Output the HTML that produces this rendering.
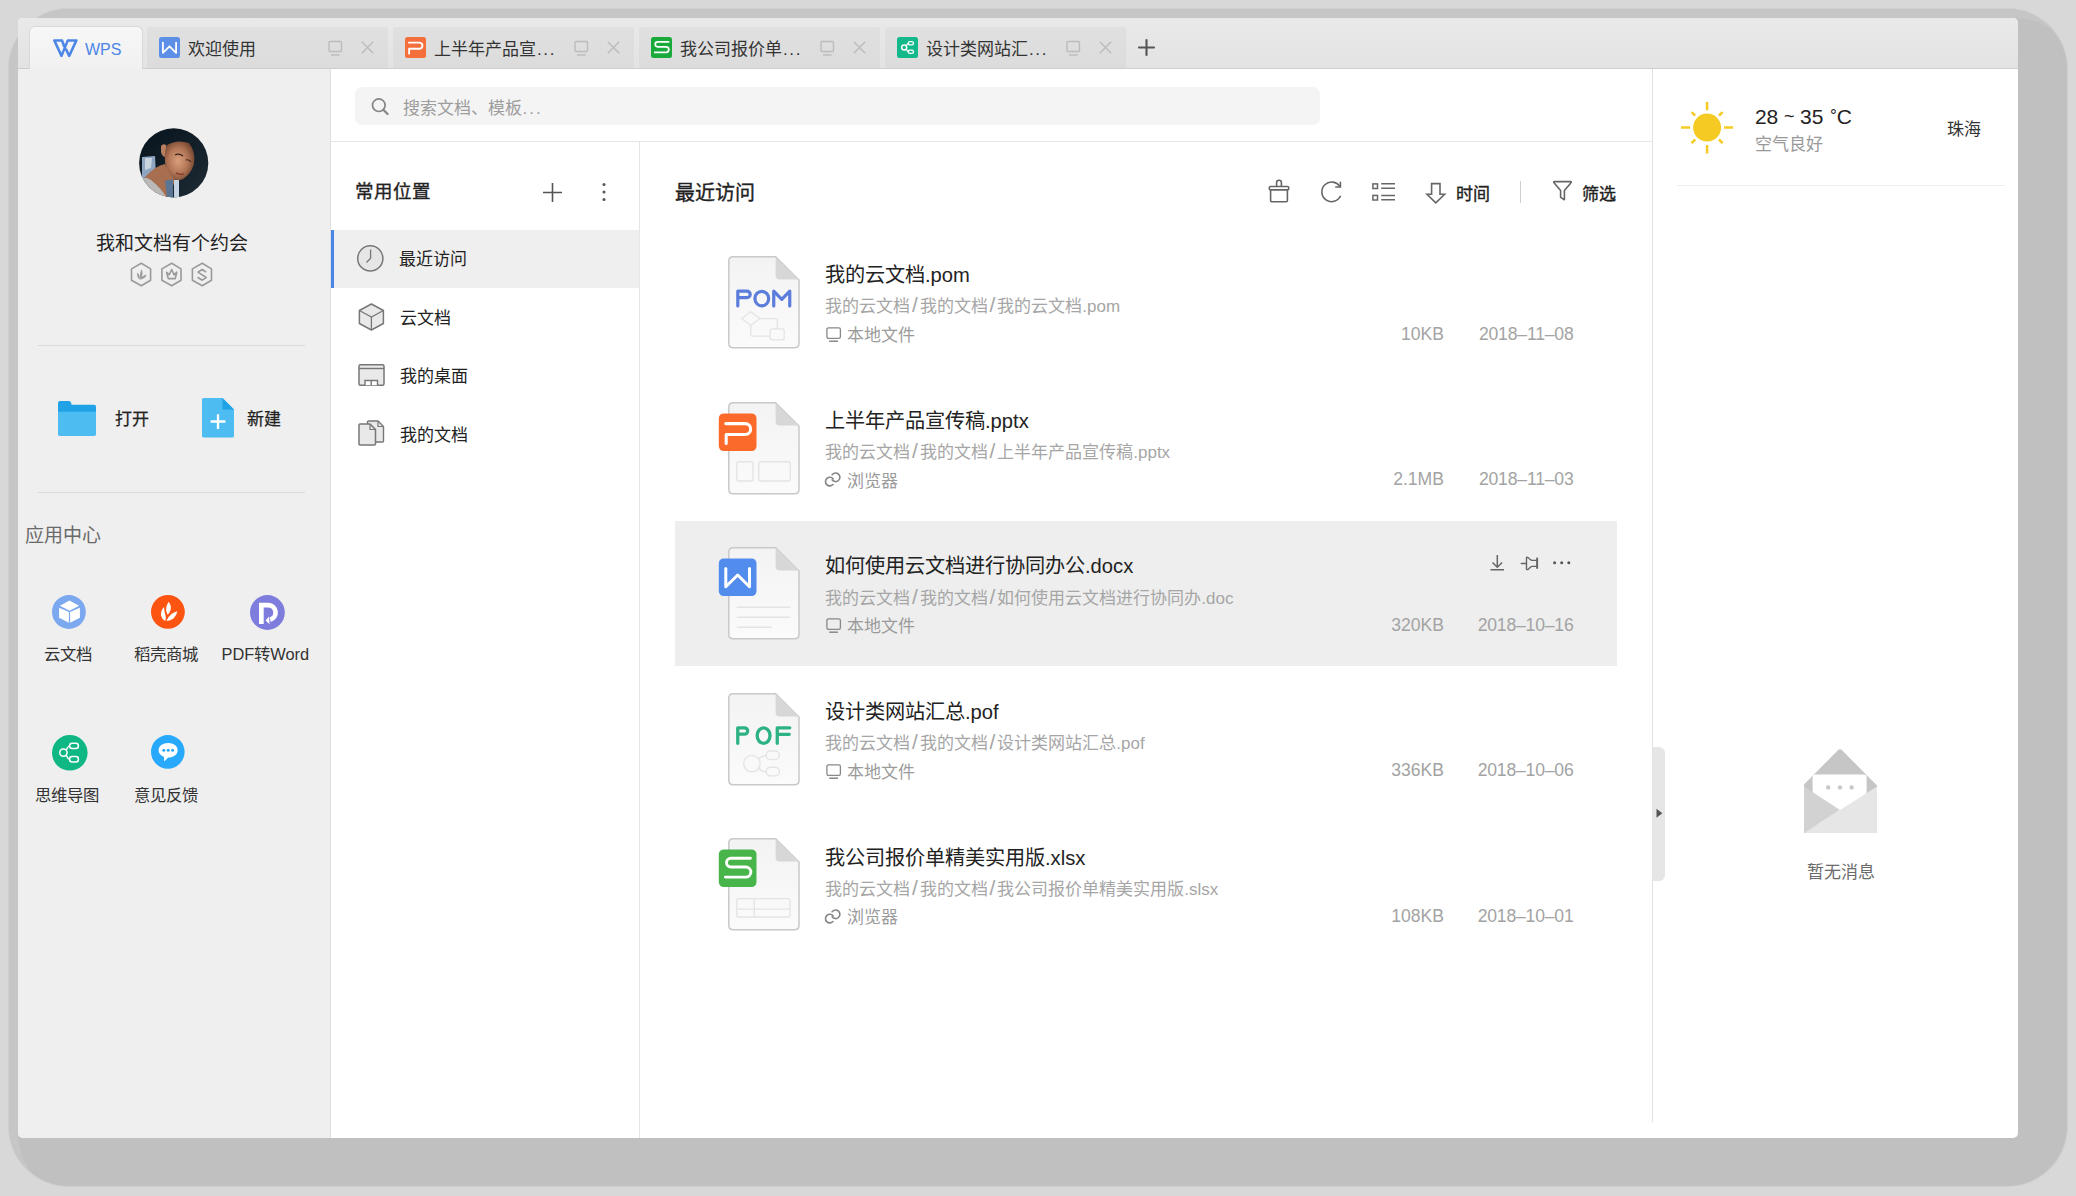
<!DOCTYPE html>
<html lang="zh-CN">
<head>
<meta charset="utf-8">
<style>
*{box-sizing:border-box;margin:0;padding:0}
html,body{width:2076px;height:1196px;overflow:hidden;background:#d8d8d8;font-family:"Liberation Sans",sans-serif;color:#222}
.a{position:absolute;white-space:nowrap}
svg.a{overflow:visible}
</style>
</head>
<body>

<div class="a" style="left:8.5px;top:8.8px;width:2058px;height:1177px;border-radius:60px;background:#c0c0c0;box-shadow:inset 9.5px 9.2px 0 #c6c6c6,0 0 0 1.2px #d0d0d0"></div>
<div class="a" style="left:18px;top:18px;width:2000px;height:1120px;border-radius:5px;background:#fff;overflow:hidden">
<div class="a" style="left:0;top:0;width:2000px;height:51px;background:linear-gradient(#e9e9e9,#e3e3e3);border-bottom:1px solid #cecece"></div>
<div class="a" style="left:0;top:51px;width:313px;height:1069px;background:#efefef;border-right:1px solid #dfdfdf"></div>
<div class="a" style="left:621px;top:124px;width:1px;height:996px;background:#e6e6e6"></div>
<div class="a" style="left:313px;top:123px;width:1322px;height:1px;background:#e6e6e6"></div>
<div class="a" style="left:1634px;top:51px;width:1px;height:1053px;background:#e2e2e2"></div>
</div>
<div class="a" style="left:29px;top:26px;width:114px;height:43px;border-radius:6px 6px 0 0;background:linear-gradient(#f7f7f7,#f1f1f1);border:1px solid #d9d9d9;border-bottom:none"></div>
<svg class="a" style="left:0;top:0" width="1" height="1"><path d="M64 46 L62 40.4 L54.3 40.4 L61.5 55.9 L67.8 40.4 L76.4 40.4 L69.2 55.9 L66.2 49.6" fill="none" stroke="#4c86e6" stroke-width="2.5" stroke-linejoin="round" stroke-linecap="round"/></svg>
<div class="a" style="left:85px;top:41.6px;font-size:16px;line-height:16px;color:#4c86e6;">WPS</div>
<div class="a" style="left:147px;top:27px;width:241px;height:41px;border-radius:3px 3px 0 0;background:linear-gradient(#e0e0e0,#dcdcdc)"></div>
<svg class="a" style="left:159px;top:37px" width="21" height="21" viewBox="0 0 21 21"><rect width="21" height="21" rx="2.5" fill="#5d8fe6"/><path d="M3.9 5.6 V15.8 L10.5 9.3 L17.1 15.8 V5.6" fill="none" stroke="#fff" stroke-width="1.8" stroke-linecap="round" stroke-linejoin="round"/></svg>
<div class="a" style="left:188px;top:40.5px;font-size:17px;line-height:17px;color:#333;">欢迎使用</div>
<svg class="a" style="left:328px;top:40px" width="15" height="17" viewBox="0 0 15 17"><rect x="1" y="1.5" width="12.5" height="10" rx="1" fill="none" stroke="#bcbcbc" stroke-width="1.4"/><line x1="3" y1="15" x2="11.5" y2="15" stroke="#bcbcbc" stroke-width="1.5"/></svg>
<svg class="a" style="left:360.5px;top:41px" width="13" height="13" viewBox="0 0 13 13"><path d="M0.8 0.8L12.2 12.2M12.2 0.8L0.8 12.2" stroke="#bcbcbc" stroke-width="1.4"/></svg>
<div class="a" style="left:393px;top:27px;width:241px;height:41px;border-radius:3px 3px 0 0;background:linear-gradient(#e0e0e0,#dcdcdc)"></div>
<svg class="a" style="left:405px;top:37px" width="21" height="21" viewBox="0 0 21 21"><rect width="21" height="21" rx="2.5" fill="#f46f3b"/><path d="M3.9 5.7 H14.7 A3.04 3.04 0 0 1 14.7 11.75 H4.1 V16.7" fill="none" stroke="#fff" stroke-width="1.8" stroke-linecap="round" stroke-linejoin="round"/></svg>
<div class="a" style="left:434px;top:40.5px;font-size:17px;line-height:17px;color:#333;">上半年产品宣<span style="letter-spacing:1.6px;margin-left:1px">...</span></div>
<svg class="a" style="left:574px;top:40px" width="15" height="17" viewBox="0 0 15 17"><rect x="1" y="1.5" width="12.5" height="10" rx="1" fill="none" stroke="#bcbcbc" stroke-width="1.4"/><line x1="3" y1="15" x2="11.5" y2="15" stroke="#bcbcbc" stroke-width="1.5"/></svg>
<svg class="a" style="left:606.5px;top:41px" width="13" height="13" viewBox="0 0 13 13"><path d="M0.8 0.8L12.2 12.2M12.2 0.8L0.8 12.2" stroke="#bcbcbc" stroke-width="1.4"/></svg>
<div class="a" style="left:639px;top:27px;width:241px;height:41px;border-radius:3px 3px 0 0;background:linear-gradient(#e0e0e0,#dcdcdc)"></div>
<svg class="a" style="left:651px;top:37px" width="21" height="21" viewBox="0 0 21 21"><rect width="21" height="21" rx="2.5" fill="#1aaa3c"/><path d="M17.6 4.9 H6.7 A2.45 2.45 0 0 0 6.7 9.8 H15 A2.8 2.8 0 0 1 15 15.4 H3.7" fill="none" stroke="#fff" stroke-width="1.7" stroke-linecap="round" stroke-linejoin="round"/></svg>
<div class="a" style="left:680px;top:40.5px;font-size:17px;line-height:17px;color:#333;">我公司报价单<span style="letter-spacing:1.6px;margin-left:1px">...</span></div>
<svg class="a" style="left:820px;top:40px" width="15" height="17" viewBox="0 0 15 17"><rect x="1" y="1.5" width="12.5" height="10" rx="1" fill="none" stroke="#bcbcbc" stroke-width="1.4"/><line x1="3" y1="15" x2="11.5" y2="15" stroke="#bcbcbc" stroke-width="1.5"/></svg>
<svg class="a" style="left:852.5px;top:41px" width="13" height="13" viewBox="0 0 13 13"><path d="M0.8 0.8L12.2 12.2M12.2 0.8L0.8 12.2" stroke="#bcbcbc" stroke-width="1.4"/></svg>
<div class="a" style="left:885px;top:27px;width:241px;height:41px;border-radius:3px 3px 0 0;background:linear-gradient(#e0e0e0,#dcdcdc)"></div>
<svg class="a" style="left:897px;top:37px" width="21" height="21" viewBox="0 0 21 21"><rect width="21" height="21" rx="2.5" fill="#13b98a"/><circle cx="7.2" cy="10.5" r="2.5" fill="none" stroke="#fff" stroke-width="1.4"/><rect x="11.3" y="4.6" width="5.2" height="3.2" rx="1.6" fill="none" stroke="#fff" stroke-width="1.3"/><rect x="11.3" y="13.2" width="5.2" height="3.2" rx="1.6" fill="none" stroke="#fff" stroke-width="1.3"/><path d="M9.2 9.2 Q10.2 6.6 11.3 6.3 M9.2 11.8 Q10.2 14.4 11.3 14.8" fill="none" stroke="#fff" stroke-width="1.3"/></svg>
<div class="a" style="left:926px;top:40.5px;font-size:17px;line-height:17px;color:#333;">设计类网站汇<span style="letter-spacing:1.6px;margin-left:1px">...</span></div>
<svg class="a" style="left:1066px;top:40px" width="15" height="17" viewBox="0 0 15 17"><rect x="1" y="1.5" width="12.5" height="10" rx="1" fill="none" stroke="#bcbcbc" stroke-width="1.4"/><line x1="3" y1="15" x2="11.5" y2="15" stroke="#bcbcbc" stroke-width="1.5"/></svg>
<svg class="a" style="left:1098.5px;top:41px" width="13" height="13" viewBox="0 0 13 13"><path d="M0.8 0.8L12.2 12.2M12.2 0.8L0.8 12.2" stroke="#bcbcbc" stroke-width="1.4"/></svg>
<svg class="a" style="left:1138px;top:39px" width="17" height="17" viewBox="0 0 17 17"><path d="M8.5 1V16M1 8.5H16" stroke="#555" stroke-width="2.1" stroke-linecap="round"/></svg>
<svg class="a" style="left:138.5px;top:127.8px" width="70" height="70" viewBox="0 0 70 70">
  <defs><clipPath id="cav"><circle cx="34.7" cy="34.9" r="34.6"/></clipPath>
  <radialGradient id="face" cx="0.45" cy="0.5" r="0.6"><stop offset="0" stop-color="#d9a07c"/><stop offset="0.55" stop-color="#b27656"/><stop offset="1" stop-color="#6b402c"/></radialGradient>
  <linearGradient id="bgd" x1="0" y1="0" x2="1" y2="1"><stop offset="0" stop-color="#07131c"/><stop offset="1" stop-color="#1e2b35"/></linearGradient></defs>
  <g clip-path="url(#cav)">
    <rect width="70" height="70" fill="url(#bgd)"/>
    <path d="M3 29 L16 28 L17 47 L3 50 Z" fill="#8ea6c2"/>
    <path d="M6 30 L13 30 L12 40 L6 42 Z" fill="#c9d3de"/>
    <path d="M22 18 Q24 15 27 17 L27 29 Q23 29 22 24 Z" fill="#b98060"/>
    <path d="M28 17 Q38 11 50 15 Q57 24 55 36 Q52 46 44 51 Q38 54 33 50 Q27 44 26 34 Q25 24 28 16 Z" fill="url(#face)"/>
    <path d="M36 27 Q40 25 44 28" fill="none" stroke="#3a2118" stroke-width="1.2"/>
    <path d="M47 32 Q50 31 52 34" fill="none" stroke="#3a2118" stroke-width="1.2"/>
    <path d="M37 45 Q41 47 45 46" fill="none" stroke="#8a3f2c" stroke-width="1.6"/>
    <path d="M6 49 Q16 38 26 36 Q30 46 36 52 L30 70 L16 70 Z" fill="#a86e50"/>
    <path d="M0 50 Q6 48 12 52 Q22 60 28 70 L0 70 Z" fill="#b9b9b9"/>
    <path d="M26 53 L34 51 L34 70 L28 70 Z" fill="#5b7595"/>
    <path d="M35 52 L40 52 L40 70 L35 70 Z" fill="#c5d2e4"/>
  </g>
</svg>
<div class="a" style="left:96px;top:234px;font-size:19px;line-height:19px;color:#222;">我和文档有个约会</div>
<svg class="a" style="left:128px;top:261px" width="88" height="28" viewBox="0 0 88 28">
  <g fill="none" stroke="#9a9a9a" stroke-width="1.6" stroke-linejoin="round">
    <path d="M13.3 2.3 L22.6 7.9 V19.2 L13.3 24.7 L3.5 19.2 V7.9 Z"/>
    <path d="M43.7 2.3 L53 7.9 V19.2 L43.7 24.7 L33.9 19.2 V7.9 Z"/>
    <path d="M74.2 2.3 L83.5 7.9 V19.2 L74.2 24.7 L64.4 19.2 V7.9 Z"/>
    <path d="M38.6 11.2 L41.2 13.8 L43.7 8.5 L46.1 13.8 L48.8 11.2 L47.2 17.6 H40.3 Z"/>
    <path d="M78.2 11.2 L74.2 8.5 L70 11.2 L78.2 16.5 L74.2 19.2 L69.6 16.3"/>
  </g>
  <g fill="#9c9c9c">
    <path d="M13.6 8.2 Q15.6 11.8 13.5 16.5 Q12.8 17.4 12.3 17.9 Q10.9 13.8 13.6 8.2 Z"/>
    <path d="M9.3 11.6 Q12.4 14.5 11.6 18.4 Q8.5 16.5 9.3 11.6 Z"/>
    <path d="M18.6 13.6 Q17.6 17.8 11.6 18.8 Q13.6 14.8 18.6 13.6 Z"/>
  </g>
</svg>
<div class="a" style="left:38px;top:345px;width:267px;height:1px;background:#dadada"></div>
<svg class="a" style="left:58px;top:400.8px" width="38" height="36" viewBox="0 0 38 36">
  <path d="M0 2 Q0 0 2 0 H11 Q12.6 0 13 1.5 L13.6 3.8 H36.2 Q38 3.8 38 5.6 V11 H0 Z" fill="#20a3e6"/>
  <path d="M0 10.8 H38 V33.3 Q38 35 36.3 35 H1.7 Q0 35 0 33.3 Z" fill="#4dbcf1"/>
</svg>
<div class="a" style="left:115px;top:411px;font-size:17px;line-height:17px;color:#222;-webkit-text-stroke:0.25px #222">打开</div>
<svg class="a" style="left:202.3px;top:398.2px" width="32" height="40" viewBox="0 0 32 40">
  <path d="M0 1.5 Q0 0 1.5 0 H20.5 L32 11.5 V38 Q32 39.4 30.6 39.4 H1.5 Q0 39.4 0 38 Z" fill="#4dbcf1"/>
  <path d="M20.5 0 L32 11.5 H20.5 Z" fill="#20a3e6"/>
  <path d="M16 16.2 V31 M8.6 23.5 H23.4" stroke="#fff" stroke-width="2.3"/>
</svg>
<div class="a" style="left:246.5px;top:411px;font-size:17px;line-height:17px;color:#222;-webkit-text-stroke:0.25px #222">新建</div>
<div class="a" style="left:38px;top:492px;width:267px;height:1px;background:#dadada"></div>
<div class="a" style="left:24.5px;top:525.5px;font-size:19px;line-height:19px;color:#6a6a6a;">应用中心</div>
<svg class="a" style="left:51.9px;top:595.3px" width="34" height="34" viewBox="0 0 34 34">
  <circle cx="16.9" cy="17" r="16.9" fill="#7ba8ef"/>
  <path d="M17.5 5.6 L27.1 10.7 L17.5 15.8 L7.9 10.7 Z" fill="#fff"/>
  <path d="M7.1 12.8 L16.9 16.9 V27.8 L7.1 22.7 Z" fill="#fff"/>
  <path d="M27.9 12.8 L18.1 16.9 V27.8 L27.9 22.7 Z" fill="#fff"/>
</svg>
<div class="a" style="left:43.6px;top:646px;font-size:16.4px;line-height:16.4px;color:#333;">云文档</div>
<svg class="a" style="left:150.6px;top:595.1px" width="34" height="34" viewBox="0 0 34 34">
  <circle cx="16.9" cy="16.9" r="16.9" fill="#fd5411"/>
  <path d="M17.7 6.7 Q20.6 10.5 19.6 15 Q18.8 17.8 16.6 19.7 Q14.6 16.5 15.2 12.8 Q15.8 9.2 17.7 6.7 Z" fill="#fff"/>
  <path d="M13 12 Q13.4 17 14.4 20 Q15.4 23.4 14.3 26.1 Q10.8 24 10 20.4 Q9.6 15.6 13 12 Z" fill="#fff"/>
  <path d="M15.5 26.1 Q17.2 21.4 20.8 18.8 Q23.6 16.8 26.4 16.2 Q25.6 20.6 22.6 23.2 Q19.6 25.6 15.5 26.1 Z" fill="#fff"/>
</svg>
<div class="a" style="left:133.9px;top:646px;font-size:16.4px;line-height:16.4px;color:#333;">稻壳商城</div>
<svg class="a" style="left:249.7px;top:595.3px" width="35" height="35" viewBox="0 0 35 35">
  <circle cx="17.4" cy="17.5" r="17.4" fill="#7e7cdd"/>
  <path d="M11.35 28.9 V10.2 H18.7 A7.4 7.4 0 0 1 20.2 24.7" fill="none" stroke="#fff" stroke-width="4.7"/>
  <path d="M15.6 25.6 L19 21.6 L19.6 29.2 Z" fill="#fff"/>
</svg>
<div class="a" style="left:221.5px;top:646px;font-size:16.4px;line-height:16.4px;color:#333;">PDF转Word</div>
<svg class="a" style="left:51.8px;top:735.2px" width="36" height="36" viewBox="0 0 36 36">
  <circle cx="17.8" cy="17.8" r="17.8" fill="#0fb784"/>
  <circle cx="11.4" cy="17.6" r="3.7" fill="none" stroke="#fff" stroke-width="1.5"/>
  <rect x="17.6" y="8.2" width="8.8" height="5.4" rx="2.5" fill="none" stroke="#fff" stroke-width="1.5"/>
  <rect x="17.6" y="21.6" width="8.8" height="5.4" rx="2.5" fill="none" stroke="#fff" stroke-width="1.5"/>
  <path d="M14.2 15 Q15.8 11.4 17.6 10.9 M14.2 20.2 Q15.8 23.8 17.6 24.3" fill="none" stroke="#fff" stroke-width="1.5"/>
</svg>
<div class="a" style="left:35px;top:786.5px;font-size:16.4px;line-height:16.4px;color:#333;">思维导图</div>
<svg class="a" style="left:150.5px;top:735px" width="34" height="34" viewBox="0 0 34 34">
  <circle cx="16.8" cy="16.9" r="16.8" fill="#28a9fb"/>
  <path d="M17.2 8 C22.6 8 26.6 11 26.6 15.3 C26.6 19.5 22.6 22.6 17.2 22.6 L13.2 26.4 L13 22 C9.8 20.8 7.6 18.3 7.6 15.3 C7.6 11 11.8 8 17.2 8 Z" fill="#fff"/>
  <circle cx="12.8" cy="15.2" r="1.5" fill="#28a9fb"/><circle cx="17.2" cy="15.2" r="1.5" fill="#28a9fb"/><circle cx="21.6" cy="15.2" r="1.5" fill="#28a9fb"/>
</svg>
<div class="a" style="left:134px;top:786.5px;font-size:16.4px;line-height:16.4px;color:#333;">意见反馈</div>
<div class="a" style="left:355px;top:87px;width:965px;height:38px;border-radius:7px;background:#f4f4f4"></div>
<svg class="a" style="left:370px;top:97px" width="22" height="20" viewBox="0 0 22 20"><circle cx="8.8" cy="8.2" r="6.3" fill="none" stroke="#858585" stroke-width="1.7"/><path d="M13.3 12.7 L17.6 17" stroke="#858585" stroke-width="2.2" stroke-linecap="round"/></svg>
<div class="a" style="left:402.5px;top:100.3px;font-size:17px;line-height:17px;color:#9d9d9d;">搜索文档、模板<span style="letter-spacing:2px;margin-left:1px">...</span></div>
<div class="a" style="left:354.5px;top:183.2px;font-size:18.5px;line-height:18.5px;color:#222;-webkit-text-stroke:0.35px #222">常用位置</div>
<svg class="a" style="left:542px;top:182px" width="22" height="22" viewBox="0 0 22 22"><path d="M10.5 1V20M1 10.5H20" stroke="#555" stroke-width="1.6"/></svg>
<svg class="a" style="left:601px;top:182px" width="6" height="20" viewBox="0 0 6 20"><circle cx="3" cy="2.5" r="1.5" fill="#555"/><circle cx="3" cy="10" r="1.5" fill="#555"/><circle cx="3" cy="17.5" r="1.5" fill="#555"/></svg>
<div class="a" style="left:331px;top:230px;width:308px;height:58px;background:#efefef"></div>
<div class="a" style="left:331px;top:230px;width:3px;height:58px;background:#4a86e8"></div>
<svg class="a" style="left:356px;top:244px" width="29" height="29" viewBox="0 0 29 29"><circle cx="14.3" cy="14.4" r="12.6" fill="#e6e6e6" stroke="#777" stroke-width="1.5"/><path d="M14.6 5.5 V14.3 L10.5 18.5" fill="none" stroke="#777" stroke-width="1.3"/></svg>
<div class="a" style="left:399px;top:251px;font-size:17px;line-height:17px;color:#222;">最近访问</div>
<svg class="a" style="left:357px;top:302px" width="29" height="30" viewBox="0 0 29 30"><path d="M14.4 2 L26.4 8.5 V21.5 L14.4 28 L2.4 21.5 V8.5 Z" fill="#e9e9e9" stroke="#777" stroke-width="1.5" stroke-linejoin="round"/><path d="M2.4 8.5 L14.4 15 L26.4 8.5 M14.4 15 V28" fill="none" stroke="#777" stroke-width="1.3"/></svg>
<div class="a" style="left:399.5px;top:309.5px;font-size:17px;line-height:17px;color:#222;">云文档</div>
<svg class="a" style="left:357px;top:363px" width="29" height="25" viewBox="0 0 29 25"><rect x="2" y="1.8" width="25" height="20.5" rx="1.5" fill="#e9e9e9" stroke="#777" stroke-width="1.5"/><path d="M2 5.5 H27" stroke="#777" stroke-width="1.4"/><path d="M8 22.3 V17.5 H20.5 V22.3 M14.2 17.5 V22.3" fill="#fff" stroke="#777" stroke-width="1.4"/></svg>
<div class="a" style="left:399.5px;top:368.4px;font-size:17px;line-height:17px;color:#222;">我的桌面</div>
<svg class="a" style="left:357px;top:419px" width="29" height="28" viewBox="0 0 29 28"><path d="M10.5 3 Q10.5 2 11.5 2 H21 L26.5 7.5 V22 Q26.5 23 25.5 23 H11.5 Q10.5 23 10.5 22 Z" fill="#e9e9e9" stroke="#777" stroke-width="1.4"/><path d="M2 6 Q2 5 3 5 H13 L18.5 10.5 V25 Q18.5 26 17.5 26 H3 Q2 26 2 25 Z" fill="#e9e9e9" stroke="#777" stroke-width="1.5"/><path d="M13 5 V10.5 H18.5" fill="none" stroke="#777" stroke-width="1.2"/><path d="M21 2 V7.5 H26.5" fill="none" stroke="#777" stroke-width="1.2"/></svg>
<div class="a" style="left:399.5px;top:427.4px;font-size:17px;line-height:17px;color:#222;">我的文档</div>
<div class="a" style="left:675px;top:182.6px;font-size:20px;line-height:20px;color:#222;-webkit-text-stroke:0.35px #222">最近访问</div>
<svg class="a" style="left:1266px;top:178px" width="26" height="26" viewBox="0 0 26 26">
 <path d="M10.6 8.4 V4.6 Q10.6 2.2 13 2.2 Q15.4 2.2 15.4 4.6 V8.4" fill="none" stroke="#666" stroke-width="1.6"/>
 <rect x="3.3" y="8.5" width="19.4" height="3.4" rx="1.2" fill="none" stroke="#666" stroke-width="1.6"/>
 <path d="M4.6 11.9 V22.6 Q4.6 23.7 5.7 23.7 H20.3 Q21.4 23.7 21.4 22.6 V11.9" fill="none" stroke="#666" stroke-width="1.6"/>
</svg>
<svg class="a" style="left:1318px;top:178px" width="27" height="27" viewBox="0 0 27 27">
 <path d="M21.9 8.6 A9.8 9.8 0 1 0 22.6 17.8" fill="none" stroke="#666" stroke-width="1.6"/>
 <path d="M22.4 3.8 V9 H17.2" fill="none" stroke="#666" stroke-width="1.6"/>
</svg>
<svg class="a" style="left:1370px;top:181px" width="28" height="22" viewBox="0 0 28 22">
 <rect x="2.9" y="2.9" width="4.6" height="4.6" fill="none" stroke="#666" stroke-width="1.5"/>
 <rect x="2.9" y="14.4" width="4.6" height="4.6" fill="none" stroke="#666" stroke-width="1.5"/>
 <path d="M11.2 2.8 H25 M11.2 7.2 H25 M11.2 14.4 H25 M11.2 18.7 H25" stroke="#666" stroke-width="1.5"/>
</svg>
<svg class="a" style="left:1425px;top:181px" width="22" height="24" viewBox="0 0 22 24">
 <path d="M6.6 2.6 H15 V13.2 H19.6 L10.8 21.8 L2 13.2 H6.6 Z" fill="none" stroke="#666" stroke-width="1.6" stroke-linejoin="miter"/>
</svg>
<div class="a" style="left:1456px;top:186px;font-size:17px;line-height:17px;color:#222;-webkit-text-stroke:0.35px #222">时间</div>
<div class="a" style="left:1520px;top:180.5px;width:1.3px;height:22.3px;background:#cfcfcf"></div>
<svg class="a" style="left:1551px;top:179px" width="23" height="24" viewBox="0 0 23 24">
 <path d="M3 3.8 Q2.2 2.6 3.6 2.6 H19.4 Q20.8 2.6 20 3.8 L13.4 11.4 V20.8 L9.6 18.4 V11.4 Z" fill="none" stroke="#666" stroke-width="1.6" stroke-linejoin="round"/>
</svg>
<div class="a" style="left:1582.3px;top:186px;font-size:17px;line-height:17px;color:#222;-webkit-text-stroke:0.35px #222">筛选</div>
<div class="a" style="left:675px;top:521px;width:942px;height:144.5px;background:#eeeeee"></div>
<svg class="a" style="left:728px;top:256.0px" width="72" height="93" viewBox="0 0 72 93">
<defs><linearGradient id="dg0" x1="0" y1="0" x2="0" y2="1"><stop offset="0" stop-color="#f3f3f3"/><stop offset="1" stop-color="#fbfbfb"/></linearGradient></defs>
<path d="M5.2 0.8 H47.6 L71 24 V87.3 Q71 91.8 66.5 91.8 H5.3 Q0.8 91.8 0.8 87.3 V5.2 Q0.8 0.8 5.2 0.8 Z" fill="url(#dg0)" stroke="#c9c9c9" stroke-width="1.5"/>
<path d="M47.6 1.3 V19.5 Q47.6 23.6 51.6 23.6 H70.6 Z" fill="#d7d7d7"/>
<path d="M9.8 50 V35.2 H19 A3.2 3.2 0 0 1 19 41.6 H9.8" fill="none" stroke="#5c7ddb" stroke-width="3.2" stroke-linecap="round" stroke-linejoin="round"/>
<ellipse cx="33.8" cy="42.6" rx="6.9" ry="7.3" fill="none" stroke="#5c7ddb" stroke-width="3.2"/>
<path d="M45.75 50 V35.2 L53.75 43.4 L61.75 35.2 V50" fill="none" stroke="#5c7ddb" stroke-width="3.2" stroke-linecap="round" stroke-linejoin="round"/>
<path d="M22.8 55.8 L32 62.6 L22.8 69.4 L13.6 62.6 Z" fill="none" stroke="#e4e4e4" stroke-width="1.3"/>
<path d="M32 62.6 H47.8 Q49.4 62.6 49.4 64.2 V78.6 Q49.4 80.2 47.8 80.2 H24.4 Q22.8 80.2 22.8 78.6 V69.4" fill="none" stroke="#e4e4e4" stroke-width="1.3"/>
<rect x="42.2" y="72.8" width="14" height="11" rx="2" fill="#fafafa" stroke="#e4e4e4" stroke-width="1.3"/>
</svg>
<div class="a" style="left:825px;top:265.2px;font-size:20.2px;line-height:20.2px;color:#222;">我的云文档.pom</div>
<div class="a" style="left:825px;top:298.4px;font-size:17px;line-height:17px;color:#a6a6a6;">我的云文档<span style="margin:0 1.9px;font-size:21px;line-height:0">/</span>我的文档<span style="margin:0 1.9px;font-size:21px;line-height:0">/</span>我的云文档.pom</div>
<svg class="a" style="left:825px;top:326.0px" width="18" height="18" viewBox="0 0 18 18"><rect x="1.9" y="1.8" width="13.5" height="10.6" rx="1.6" fill="none" stroke="#888" stroke-width="1.3"/><path d="M4.2 15.2 H13" stroke="#888" stroke-width="1.5"/></svg>
<div class="a" style="left:846.5px;top:327.0px;font-size:17px;line-height:17px;color:#9b9b9b;">本地文件</div>
<div class="a" style="left:1300px;top:324.5px;width:144px;text-align:right;font-size:17.6px;line-height:18px;color:#a3a3a3;letter-spacing:0px">10KB</div>
<div class="a" style="left:1400px;top:324.5px;width:173.5px;text-align:right;font-size:17.6px;line-height:18px;color:#a3a3a3;letter-spacing:-0.2px">2018–11–08</div>
<svg class="a" style="left:728px;top:401.6px" width="72" height="93" viewBox="0 0 72 93">
<defs><linearGradient id="dg1" x1="0" y1="0" x2="0" y2="1"><stop offset="0" stop-color="#f3f3f3"/><stop offset="1" stop-color="#fbfbfb"/></linearGradient></defs>
<path d="M5.2 0.8 H47.6 L71 24 V87.3 Q71 91.8 66.5 91.8 H5.3 Q0.8 91.8 0.8 87.3 V5.2 Q0.8 0.8 5.2 0.8 Z" fill="url(#dg1)" stroke="#c9c9c9" stroke-width="1.5"/>
<path d="M47.6 1.3 V19.5 Q47.6 23.6 51.6 23.6 H70.6 Z" fill="#d7d7d7"/>
<rect x="8.8" y="59.7" width="16.2" height="19.3" rx="2" fill="none" stroke="#e4e4e4" stroke-width="1.4"/>
<rect x="30.7" y="59.7" width="31.6" height="19.3" rx="2" fill="none" stroke="#e4e4e4" stroke-width="1.4"/><g transform="translate(-9.2,11.4)"><rect width="37.7" height="37.7" rx="5" fill="#fb6a2b"/><path d="M7 10.2 H26.4 A5.45 5.45 0 0 1 26.4 21.1 H7.4 V30" fill="none" stroke="#fff" stroke-width="3.1" stroke-linecap="round" stroke-linejoin="round"/></g>
</svg>
<div class="a" style="left:825px;top:410.79999999999995px;font-size:20.2px;line-height:20.2px;color:#222;">上半年产品宣传稿.pptx</div>
<div class="a" style="left:825px;top:444.0px;font-size:17px;line-height:17px;color:#a6a6a6;">我的云文档<span style="margin:0 1.9px;font-size:21px;line-height:0">/</span>我的文档<span style="margin:0 1.9px;font-size:21px;line-height:0">/</span>上半年产品宣传稿.pptx</div>
<svg class="a" style="left:825.3px;top:471.70000000000005px" width="16" height="16" viewBox="0 0 16 16"><path d="M7.12 2.77 A4.3 4.3 0 1 1 7.12 7.83" fill="none" stroke="#858585" stroke-width="1.6" stroke-linecap="round"/><path d="M7.94 12.53 A4.3 4.3 0 1 1 8.09 6.84" fill="none" stroke="#858585" stroke-width="1.6" stroke-linecap="round"/></svg>
<div class="a" style="left:846.5px;top:472.6px;font-size:17px;line-height:17px;color:#9b9b9b;">浏览器</div>
<div class="a" style="left:1300px;top:470.1px;width:144px;text-align:right;font-size:17.6px;line-height:18px;color:#a3a3a3;letter-spacing:0px">2.1MB</div>
<div class="a" style="left:1400px;top:470.1px;width:173.5px;text-align:right;font-size:17.6px;line-height:18px;color:#a3a3a3;letter-spacing:-0.2px">2018–11–03</div>
<svg class="a" style="left:728px;top:547.2px" width="72" height="93" viewBox="0 0 72 93">
<defs><linearGradient id="dg2" x1="0" y1="0" x2="0" y2="1"><stop offset="0" stop-color="#f3f3f3"/><stop offset="1" stop-color="#fbfbfb"/></linearGradient></defs>
<path d="M5.2 0.8 H47.6 L71 24 V87.3 Q71 91.8 66.5 91.8 H5.3 Q0.8 91.8 0.8 87.3 V5.2 Q0.8 0.8 5.2 0.8 Z" fill="url(#dg2)" stroke="#c9c9c9" stroke-width="1.5"/>
<path d="M47.6 1.3 V19.5 Q47.6 23.6 51.6 23.6 H70.6 Z" fill="#d7d7d7"/>
<path d="M8.8 60.2 H62.3 M8.8 70.2 H62.3 M8.8 80.3 H43.9" stroke="#e4e4e4" stroke-width="1.4"/><g transform="translate(-9.2,11.4)"><rect width="37.7" height="37.7" rx="5" fill="#528ded"/><path d="M7 10 V28.3 L18.9 16.6 L30.7 28.3 V10" fill="none" stroke="#fff" stroke-width="3" stroke-linecap="round" stroke-linejoin="round"/></g>
</svg>
<div class="a" style="left:825px;top:556.4px;font-size:20.2px;line-height:20.2px;color:#222;">如何使用云文档进行协同办公.docx</div>
<div class="a" style="left:825px;top:589.5999999999999px;font-size:17px;line-height:17px;color:#a6a6a6;">我的云文档<span style="margin:0 1.9px;font-size:21px;line-height:0">/</span>我的文档<span style="margin:0 1.9px;font-size:21px;line-height:0">/</span>如何使用云文档进行协同办.doc</div>
<svg class="a" style="left:825px;top:617.2px" width="18" height="18" viewBox="0 0 18 18"><rect x="1.9" y="1.8" width="13.5" height="10.6" rx="1.6" fill="none" stroke="#888" stroke-width="1.3"/><path d="M4.2 15.2 H13" stroke="#888" stroke-width="1.5"/></svg>
<div class="a" style="left:846.5px;top:618.2px;font-size:17px;line-height:17px;color:#9b9b9b;">本地文件</div>
<div class="a" style="left:1300px;top:615.7px;width:144px;text-align:right;font-size:17.6px;line-height:18px;color:#a3a3a3;letter-spacing:0px">320KB</div>
<div class="a" style="left:1400px;top:615.7px;width:173.5px;text-align:right;font-size:17.6px;line-height:18px;color:#a3a3a3;letter-spacing:-0.2px">2018–10–16</div>
<svg class="a" style="left:728px;top:692.8px" width="72" height="93" viewBox="0 0 72 93">
<defs><linearGradient id="dg3" x1="0" y1="0" x2="0" y2="1"><stop offset="0" stop-color="#f3f3f3"/><stop offset="1" stop-color="#fbfbfb"/></linearGradient></defs>
<path d="M5.2 0.8 H47.6 L71 24 V87.3 Q71 91.8 66.5 91.8 H5.3 Q0.8 91.8 0.8 87.3 V5.2 Q0.8 0.8 5.2 0.8 Z" fill="url(#dg3)" stroke="#c9c9c9" stroke-width="1.5"/>
<path d="M47.6 1.3 V19.5 Q47.6 23.6 51.6 23.6 H70.6 Z" fill="#d7d7d7"/>
<path d="M9.75 50.35 V34.85 H16.5 A3.15 3.15 0 0 1 16.5 41.15 H9.75" fill="none" stroke="#2db383" stroke-width="3.3" stroke-linecap="round" stroke-linejoin="round"/>
<ellipse cx="35.6" cy="42.6" rx="6.45" ry="7.75" fill="none" stroke="#2db383" stroke-width="3.3"/>
<path d="M61.75 34.85 H49.25 V50.35 M49.25 41.3 H61.3" fill="none" stroke="#2db383" stroke-width="3.3" stroke-linecap="round" stroke-linejoin="round"/>
<circle cx="23.9" cy="70.6" r="8.2" fill="none" stroke="#e4e4e4" stroke-width="1.4"/>
<path d="M30.5 66 Q33 63 38.2 62.6 M30.5 75 Q33 78.5 38.2 78.8" fill="none" stroke="#e4e4e4" stroke-width="1.4"/>
<rect x="38.2" y="58" width="13.2" height="8.6" rx="4.3" fill="none" stroke="#e4e4e4" stroke-width="1.4"/>
<rect x="38.2" y="74.3" width="13.2" height="8.6" rx="4.3" fill="none" stroke="#e4e4e4" stroke-width="1.4"/>
</svg>
<div class="a" style="left:825px;top:702.0px;font-size:20.2px;line-height:20.2px;color:#222;">设计类网站汇总.pof</div>
<div class="a" style="left:825px;top:735.1999999999999px;font-size:17px;line-height:17px;color:#a6a6a6;">我的云文档<span style="margin:0 1.9px;font-size:21px;line-height:0">/</span>我的文档<span style="margin:0 1.9px;font-size:21px;line-height:0">/</span>设计类网站汇总.pof</div>
<svg class="a" style="left:825px;top:762.8px" width="18" height="18" viewBox="0 0 18 18"><rect x="1.9" y="1.8" width="13.5" height="10.6" rx="1.6" fill="none" stroke="#888" stroke-width="1.3"/><path d="M4.2 15.2 H13" stroke="#888" stroke-width="1.5"/></svg>
<div class="a" style="left:846.5px;top:763.8px;font-size:17px;line-height:17px;color:#9b9b9b;">本地文件</div>
<div class="a" style="left:1300px;top:761.3px;width:144px;text-align:right;font-size:17.6px;line-height:18px;color:#a3a3a3;letter-spacing:0px">336KB</div>
<div class="a" style="left:1400px;top:761.3px;width:173.5px;text-align:right;font-size:17.6px;line-height:18px;color:#a3a3a3;letter-spacing:-0.2px">2018–10–06</div>
<svg class="a" style="left:728px;top:838.4px" width="72" height="93" viewBox="0 0 72 93">
<defs><linearGradient id="dg4" x1="0" y1="0" x2="0" y2="1"><stop offset="0" stop-color="#f3f3f3"/><stop offset="1" stop-color="#fbfbfb"/></linearGradient></defs>
<path d="M5.2 0.8 H47.6 L71 24 V87.3 Q71 91.8 66.5 91.8 H5.3 Q0.8 91.8 0.8 87.3 V5.2 Q0.8 0.8 5.2 0.8 Z" fill="url(#dg4)" stroke="#c9c9c9" stroke-width="1.5"/>
<path d="M47.6 1.3 V19.5 Q47.6 23.6 51.6 23.6 H70.6 Z" fill="#d7d7d7"/>
<rect x="8.8" y="60.6" width="53.2" height="18.4" rx="2" fill="none" stroke="#e4e4e4" stroke-width="1.4"/>
<path d="M8.8 71.1 H62 M26.3 60.6 V79" stroke="#e4e4e4" stroke-width="1.4"/><g transform="translate(-9.2,11.4)"><rect width="37.7" height="37.7" rx="5" fill="#48b54b"/><path d="M31.6 8.8 H12.1 A4.4 4.4 0 0 0 12.1 17.6 H27 A5.05 5.05 0 0 1 27 27.7 H6.6" fill="none" stroke="#fff" stroke-width="2.9" stroke-linecap="round" stroke-linejoin="round"/></g>
</svg>
<div class="a" style="left:825px;top:847.5999999999999px;font-size:20.2px;line-height:20.2px;color:#222;">我公司报价单精美实用版.xlsx</div>
<div class="a" style="left:825px;top:880.8px;font-size:17px;line-height:17px;color:#a6a6a6;">我的云文档<span style="margin:0 1.9px;font-size:21px;line-height:0">/</span>我的文档<span style="margin:0 1.9px;font-size:21px;line-height:0">/</span>我公司报价单精美实用版.slsx</div>
<svg class="a" style="left:825.3px;top:908.5px" width="16" height="16" viewBox="0 0 16 16"><path d="M7.12 2.77 A4.3 4.3 0 1 1 7.12 7.83" fill="none" stroke="#858585" stroke-width="1.6" stroke-linecap="round"/><path d="M7.94 12.53 A4.3 4.3 0 1 1 8.09 6.84" fill="none" stroke="#858585" stroke-width="1.6" stroke-linecap="round"/></svg>
<div class="a" style="left:846.5px;top:909.4px;font-size:17px;line-height:17px;color:#9b9b9b;">浏览器</div>
<div class="a" style="left:1300px;top:906.9px;width:144px;text-align:right;font-size:17.6px;line-height:18px;color:#a3a3a3;letter-spacing:0px">108KB</div>
<div class="a" style="left:1400px;top:906.9px;width:173.5px;text-align:right;font-size:17.6px;line-height:18px;color:#a3a3a3;letter-spacing:-0.2px">2018–10–01</div>
<svg class="a" style="left:1488px;top:553px" width="90" height="20" viewBox="0 0 90 20">
 <path d="M9.3 2 V14 M4.5 9.5 L9.3 14.3 L14.1 9.5 M2.5 16.8 H16" fill="none" stroke="#666" stroke-width="1.5"/>
 <path d="M33.3 10.5 H38.5 M38.5 4.5 V16.4 M38.6 4.4 Q39.8 3.6 42.3 6.6 Q43.1 7.4 44.2 7.4 H49 M38.6 16.5 Q39.8 17.3 42.3 14.2 Q43.1 13.4 44.2 13.4 H49" fill="none" stroke="#666" stroke-width="1.4" stroke-linecap="round" stroke-linejoin="round"/>
 <path d="M49.1 5.6 V15" stroke="#666" stroke-width="2" stroke-linecap="round"/>
 <circle cx="66.6" cy="9.8" r="1.5" fill="#555"/><circle cx="73.7" cy="9.8" r="1.5" fill="#555"/><circle cx="80.8" cy="9.8" r="1.5" fill="#555"/>
</svg>
<svg class="a" style="left:1677px;top:98px" width="60" height="60" viewBox="0 0 60 60">
 <circle cx="30.1" cy="29.6" r="14" fill="#f5cb23"/>
 <g stroke="#f5cb23" stroke-width="2.5" stroke-linecap="butt">
  <path d="M30.1 4 V12.2 M30.1 46.9 V55.6 M4 29.6 H13.2 M47 29.6 H56.1"/>
  <path d="M14.6 14.1 L18.2 17.7 M42 41.5 L45.6 45.1 M45.6 14.1 L42 17.7 M18.2 41.5 L14.6 45.1"/>
 </g>
</svg>
<div class="a" style="left:1755px;top:105.4px;font-size:21px;line-height:21px;color:#222;letter-spacing:-0.1px">28 <span style="font-size:18px;vertical-align:2px">~</span> 35 <span style="font-size:17px;vertical-align:3px;margin-left:1px">°</span>C</div>
<div class="a" style="left:1755px;top:136.3px;font-size:17px;line-height:17px;color:#999;">空气良好</div>
<div class="a" style="left:1947px;top:121.4px;font-size:17px;line-height:17px;color:#333;">珠海</div>
<div class="a" style="left:1677px;top:185px;width:328px;height:1px;background:#eeeeee"></div>
<div class="a" style="left:1653px;top:747px;width:12px;height:134px;background:#e6e6e6;border-radius:0 6px 6px 0"></div>
<svg class="a" style="left:1656px;top:808px" width="8" height="11" viewBox="0 0 8 11"><path d="M0.5 0.8 L6.3 5.3 L0.5 9.8 Z" fill="#555"/></svg>
<svg class="a" style="left:1803px;top:747px" width="76" height="88" viewBox="0 0 76 88">
 <path d="M1 37.5 L35 3.2 Q37 1.2 39 3.2 L74 38.5 V86 H1 Z" fill="#c6c6c6"/>
 <rect x="9.6" y="27.6" width="54" height="50" rx="2.5" fill="#ffffff"/>
 <circle cx="25.2" cy="40.4" r="2.2" fill="#c8c8c8"/><circle cx="37" cy="40.4" r="2.2" fill="#c8c8c8"/><circle cx="48.6" cy="40.4" r="2.2" fill="#c8c8c8"/>
 <path d="M1 39.5 L37 63 L1 86 Z" fill="#d2d2d2"/>
 <path d="M74 39.5 V86 H1 Z" fill="#e6e6e6"/>
</svg>
<div class="a" style="left:1807px;top:864px;font-size:17px;line-height:17px;color:#6a6a6a;">暂无消息</div>
</body></html>
